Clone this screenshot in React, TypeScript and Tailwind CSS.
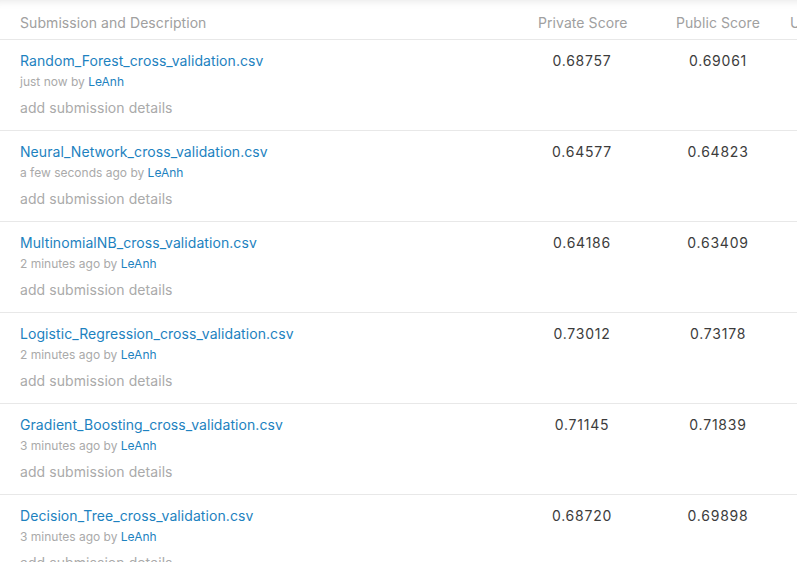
const SUBMISSIONS = [
  { file: 'Random_Forest_cross_validation.csv', when: 'just now', priv: '0.68757', pub: '0.69061' },
  { file: 'Neural_Network_cross_validation.csv', when: 'a few seconds ago', priv: '0.64577', pub: '0.64823' },
  { file: 'MultinomialNB_cross_validation.csv', when: '2 minutes ago', priv: '0.64186', pub: '0.63409' },
  { file: 'Logistic_Regression_cross_validation.csv', when: '2 minutes ago', priv: '0.73012', pub: '0.73178' },
  { file: 'Gradient_Boosting_cross_validation.csv', when: '3 minutes ago', priv: '0.71145', pub: '0.71839' },
  { file: 'Decision_Tree_cross_validation.csv', when: '3 minutes ago', priv: '0.68720', pub: '0.69898' },
];

const App = () => {
  return (
    <div
      className="w-[797px] h-[562px] overflow-hidden bg-white"
      style={{ fontFamily: 'Inter, "Noto Sans", sans-serif' }}
    >
      <div className="flex w-[960px] border-b border-[#e8e8e8] pt-[13px] pb-[6px] text-sm leading-5 text-[#a0a0a0] shadow-[inset_0_9px_8px_-8px_rgba(0,0,0,0.10)]">
        <div className="w-[514px] shrink-0 pl-5 tracking-[0.005em]">Submission and Description</div>
        <div className="w-[136px] shrink-0 pl-6 whitespace-nowrap tracking-[0.005em]">Private Score</div>
        <div className="w-[136px] shrink-0 pl-[26px] whitespace-nowrap tracking-[0.005em]">Public Score</div>
        <div className="shrink-0 pl-1 whitespace-nowrap">Use for Final Score</div>
      </div>

      {SUBMISSIONS.map(s => (
        <div key={s.file} className="flex w-[960px] border-b border-[#e8e8e8] pt-[11px] pb-3">
          <div className="w-[514px] shrink-0 pl-5">
            <div className="text-sm leading-5 text-[#1d82c0] tracking-[0.005em]">{s.file}</div>
            <div className="text-xs leading-4 mt-[3px] text-[#aaaaaa]">
              {s.when} by <span className="text-[#1d82c0]">LeAnh</span>
            </div>
            <div className="text-sm leading-5 mt-2 text-[#aaaaaa] tracking-[0.005em]">add submission details</div>
          </div>
          <div className="w-[136px] shrink-0 text-center text-sm leading-5 text-[#3c3c3c] tracking-[0.055em]">{s.priv}</div>
          <div className="w-[136px] shrink-0 text-center text-sm leading-5 text-[#3c3c3c] tracking-[0.055em]">{s.pub}</div>
        </div>
      ))}
    </div>
  );
};

export default App;
